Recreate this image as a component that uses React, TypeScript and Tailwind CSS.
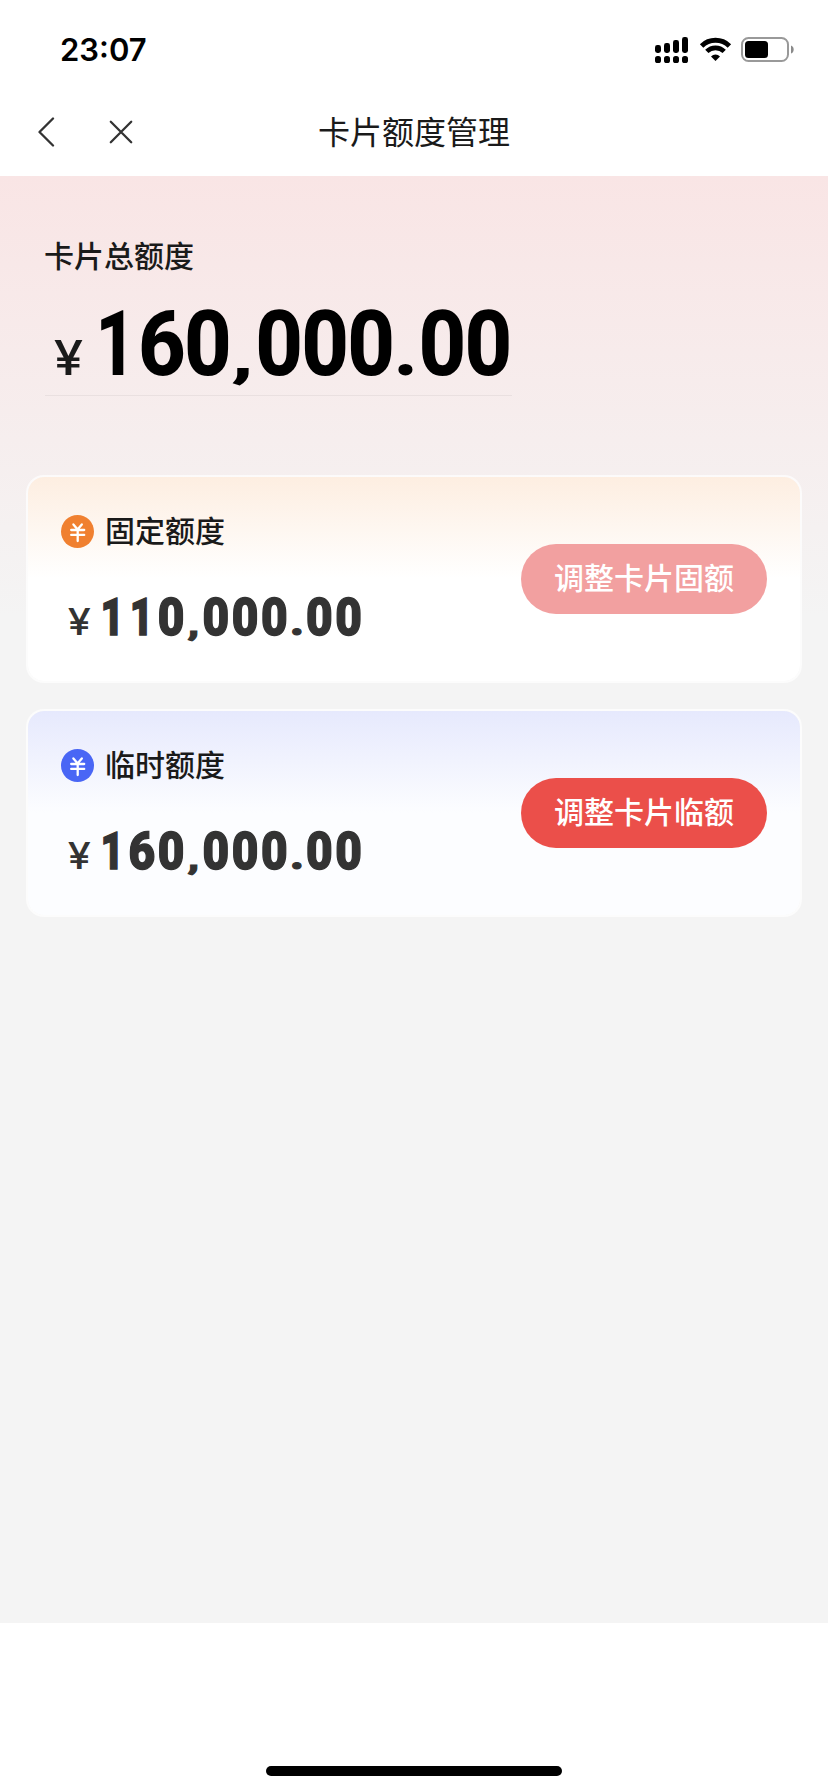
import React from "react";

type AmountProps = { value: string; size: "lg" | "sm" };

const glyphClasses = {
  lg: {
    digit: "inline-block w-[50px] text-center tracking-[-1.7px]",
    one: "inline-block w-[50px] origin-[46%_50%] scale-x-[0.84] text-center tracking-[-1.7px]",
    comma: "inline-block w-[27.4px] origin-[50%_84%] scale-x-110 scale-y-[0.64] text-center",
    period: "inline-block w-[27.4px] origin-[50%_84%] scale-y-[0.82] text-center",
  },
  sm: {
    digit: "inline-block w-[33px] text-center",
    one: "inline-block w-[33px] origin-[42%_50%] scale-x-[0.88] text-center",
    comma: "inline-block w-[17.8px] origin-[50%_84%] scale-y-[0.62] text-center",
    period: "inline-block w-[17.8px] origin-[50%_84%] scale-y-[0.74] text-center",
  },
};

function Amount({ value, size }: AmountProps) {
  const lg = size === "lg";
  const styles = glyphClasses[size];
  const classFor = (ch: string) =>
    ch === "," ? styles.comma : ch === "." ? styles.period : ch === "1" ? styles.one : styles.digit;
  return (
    <span
      className={
        lg
          ? "inline-block origin-left scale-x-[0.92] whitespace-nowrap font-['Roboto'] text-[90px] leading-[90px] font-extrabold text-black"
          : "inline-block origin-left scale-x-[0.885] whitespace-nowrap font-['Roboto'] text-[52px] leading-[52px] font-black text-[#333333] [-webkit-text-stroke:1.4px_#333333]"
      }
    >
      {value.split("").map((ch, i) => (
        <span key={i} className={classFor(ch)}>
          {ch}
        </span>
      ))}
    </span>
  );
}

function CoinIcon({ className }: { className: string }) {
  return (
    <svg viewBox="0 0 33 33" className={className} aria-hidden="true">
      <circle cx="16.5" cy="16.5" r="16.5" fill="currentColor" />
      <path
        d="M12.4 9.4l4.2 5 4.2-5M10.2 15h13M10.2 19.9h13M16.7 14.5v11.6"
        fill="none"
        stroke="white"
        strokeWidth="2.3"
        strokeLinecap="round"
      />
    </svg>
  );
}

type LimitCardProps = {
  title: string;
  value: string;
  action: string;
  cardClass: string;
  iconClass: string;
  buttonClass: string;
};

function LimitCard({ title, value, action, cardClass, iconClass, buttonClass }: LimitCardProps) {
  return (
    <section
      className={`flex h-[208px] items-center justify-between rounded-[18px] border-2 border-white/70 bg-clip-padding pr-[33px] pl-[33px] ${cardClass}`}
    >
      <div className="flex h-full flex-col">
        <div className="mt-[34px] flex h-[41px] items-center gap-[11px]">
          <CoinIcon className={`size-[33px] ${iconClass}`} />
          <h2 className="pb-[5px] text-[30px] leading-[40px] font-medium text-[#1a1a1a]">{title}</h2>
        </div>
        <div className="mt-[40px] flex h-[52px] w-[300px] items-baseline">
          <span className="w-[37px] shrink-0 origin-left scale-x-[1.12] pl-[6px] font-['Inter'] text-[37px] leading-[52px] font-medium text-[#333333]">
            ¥
          </span>
          <Amount value={value} size="sm" />
        </div>
      </div>
      <button className={`h-[70px] w-[246px] rounded-full pb-[6px] text-[30px] font-medium text-white ${buttonClass}`}>
        {action}
      </button>
    </section>
  );
}

function StatusIcons() {
  return (
    <svg viewBox="0 0 142 30" className="h-[30px] w-[142px]" aria-hidden="true">
      <g fill="black">
        <rect x="1" y="10" width="6" height="8" rx="2.4" />
        <rect x="10" y="8" width="6" height="10" rx="2.4" />
        <rect x="19" y="5" width="6" height="13" rx="2.4" />
        <rect x="28" y="2" width="6" height="16" rx="2.4" />
        <rect x="1" y="21" width="6" height="7" rx="2.6" />
        <rect x="10" y="21" width="6" height="7" rx="2.6" />
        <rect x="19" y="21" width="6" height="7" rx="2.6" />
        <rect x="28" y="21" width="6" height="7" rx="2.6" />
        <path d="M61.5 26l-4.5-4.6a6.4 6.4 0 0 1 9 0z" />
      </g>
      <g fill="none" stroke="black" strokeWidth="4.9">
        <path d="M47.6 10.9a19.8 19.8 0 0 1 27.8 0" />
        <path d="M52.8 16.4a12.4 12.4 0 0 1 17.4 0" strokeWidth="4.6" />
      </g>
      <rect x="88" y="3" width="46" height="23" rx="6.5" fill="none" stroke="#999999" strokeWidth="2" />
      <rect x="91" y="6" width="23" height="17" rx="3.5" fill="black" />
      <path d="M137 10.5c3.6 1.2 3.6 7 0 8z" fill="#8a8a8a" />
    </svg>
  );
}

export default function App() {
  return (
    <div className="flex h-[1792px] w-[828px] flex-col bg-white font-['Noto_Sans_CJK_SC',sans-serif]">
      <div className="flex h-[88px] items-center justify-between pt-[12px] pr-[32px] pl-[60px]">
        <span className="font-['Inter'] text-[31px] leading-[40px] font-semibold text-black">23:07</span>
        <StatusIcons />
      </div>
      <header className="grid h-[88px] grid-cols-[1fr_auto_1fr] items-center">
        <div className="flex items-center gap-[54px] pl-[37px]">
          <svg viewBox="0 0 18 30" className="h-[30px] w-[18px]" fill="none" stroke="#333333" strokeWidth="2.3" strokeLinecap="round" strokeLinejoin="round">
            <path d="M16 1.5L2.5 15 16 28.5" />
          </svg>
          <svg viewBox="0 0 24 24" className="size-[24px]" fill="none" stroke="#333333" strokeWidth="2.3" strokeLinecap="round">
            <path d="M1.8 1.8l20.4 20.4M22.2 1.8L1.8 22.2" />
          </svg>
        </div>
        <h1 className="pb-[5px] text-[32px] leading-[44px] text-[#1a1a1a]">卡片额度管理</h1>
      </header>

      <main className="h-[1447px] bg-[#f4f4f4] bg-[linear-gradient(180deg,#f9e5e5_0px,#f4f4f4_440px)] px-[26px]">
        <div className="flex h-[299px] flex-col pl-[18px]">
          <h2 className="mt-[58px] text-[30px] leading-[40px] font-medium text-[#1a1a1a]">卡片总额度</h2>
          <div className="mt-[26px] ml-px flex h-[96px] w-[467px] items-baseline border-b border-black/5">
            <span className="w-[47px] shrink-0 origin-left scale-x-110 pl-[8px] font-['Inter'] text-[48px] leading-[90px] font-medium text-[#1a1a1a]">
              ¥
            </span>
            <Amount value="160,000.00" size="lg" />
          </div>
        </div>
        <div className="flex flex-col gap-[26px]">
          <LimitCard
            title="固定额度"
            value="110,000.00"
            action="调整卡片固额"
            cardClass="bg-[linear-gradient(180deg,#fdeee1_0%,#ffffff_50%)]"
            iconClass="text-[#f08030]"
            buttonClass="bg-[#f2a0a0]"
          />
          <LimitCard
            title="临时额度"
            value="160,000.00"
            action="调整卡片临额"
            cardClass="bg-[linear-gradient(180deg,#e6e9fd_0%,#fcfdff_50%)]"
            iconClass="text-[#4966f5]"
            buttonClass="bg-[#eb4f4a]"
          />
        </div>
      </main>

      <footer className="flex flex-1 items-end justify-center pb-[16px]">
        <div className="h-[10px] w-[296px] rounded-full bg-black" />
      </footer>
    </div>
  );
}
